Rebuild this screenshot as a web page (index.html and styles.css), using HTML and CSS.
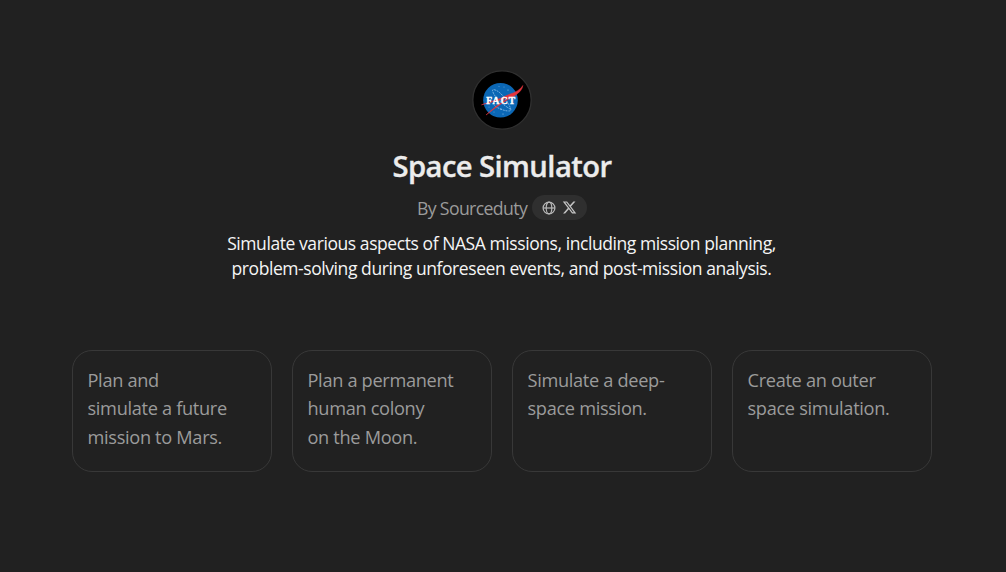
FILE: index.html
```html
<!DOCTYPE html>
<html lang="en">
<head>
<meta charset="utf-8">
<title>Space Simulator</title>
<link rel="stylesheet" href="styles.css">
</head>
<body>
<main class="page">
  <header class="intro">
    <svg class="avatar" viewBox="0 0 60 60" aria-label="Fact">
      <circle cx="30" cy="30" r="29.2" fill="#000" stroke="#303030" stroke-width="1.3"/>
      <circle cx="28.5" cy="30.2" r="17.3" fill="#0b67b5"/>
      <path d="M38 39C33 36 22 28 20.500 20.500C20.500 18.500 26 20 31 26C35 31 40 39 38.500 40.500C36 42.500 24 38 22 35" fill="none" stroke="#9fcdf0" stroke-width=".7" stroke-dasharray="2 .8"/>
      <g fill="#a9d2f2"><circle cx="27" cy="16.500" r=".4"/><circle cx="32" cy="17" r=".4"/><circle cx="36" cy="20" r=".5"/><circle cx="17" cy="37" r=".4"/><circle cx="22" cy="42" r=".4"/><circle cx="31" cy="44" r=".5"/><circle cx="29" cy="39" r=".6"/></g>
      <path d="M9.500 34.800L28 28.500L37 24.500Q48 21 50.800 15.500Q50.500 20.500 43 25.500Q31 32 14 45Q25 34 38 27.500L28 30Z" fill="#e5343d" stroke="#e5343d" stroke-width=".5"/>
      <text class="avatar-text" x="14.200" y="33.800" textLength="29" lengthAdjust="spacing">FACT</text>
    </svg>
    <h1 class="title">Space Simulator</h1>
    <div class="byline">
      <span class="author">By Sourceduty</span>
      <span class="links">
        <svg class="icon" viewBox="0 0 14 14" fill="none" stroke="#b8b8b8" stroke-width="1.2"><circle cx="7" cy="7" r="5.900"/><ellipse cx="7" cy="7" rx="2.800" ry="5.900"/><path d="M1.100 7H12.900"/></svg>
        <svg class="icon icon-x" viewBox="0 0 24 24" fill="#c4c4c4"><path d="M18.244 2.250h3.308l-7.227 8.260 8.502 11.240H16.170l-5.214-6.817L4.990 21.750H1.680l7.730-8.835L1.254 2.250H8.080l4.713 6.231zm-1.161 17.520h1.833L7.084 4.126H5.117z"/></svg>
      </span>
    </div>
    <p class="description">Simulate various aspects of NASA missions, including mission planning,<br>problem-solving during unforeseen events, and post-mission analysis.</p>
  </header>
  <section class="cards">
    <button class="card">Plan and<br>simulate a future<br>mission to Mars.</button>
    <button class="card">Plan a permanent<br>human colony<br>on the Moon.</button>
    <button class="card">Simulate a deep-<br>space mission.</button>
    <button class="card">Create an outer<br>space simulation.</button>
  </section>
</main>
</body>
</html>
```
FILE: styles.css
```css
* { box-sizing: border-box; }
body { margin: 0; background: #212121; font-family: "Open Sans", "Noto Sans", sans-serif; }
.page { height: 572px; padding: 70px 74px 0 72px; overflow: hidden; }
.intro { display: flex; flex-direction: column; align-items: center; height: 280px; }
.avatar { display: block; width: 60px; height: 60px; flex: none; }
.avatar-text { font: 700 9.500px "Liberation Serif", serif; fill: #fff; stroke: #fff; stroke-width: .4px; }
.title { margin: 16px 0 0; font-size: 29.200px; line-height: 40px; font-weight: 600; letter-spacing: -.58px; color: #ececec; -webkit-text-stroke: .35px #ececec; white-space: nowrap; }
.byline { display: flex; align-items: center; gap: 5px; height: 25px; margin-top: 9px; }
.author { padding-top: 2px; font-size: 17.700px; line-height: 25px; color: #9b9b9b; letter-spacing: -.64px; white-space: nowrap; }
.links { display: flex; align-items: center; justify-content: center; gap: 6px; width: 55px; height: 25px; padding-right: 1px; border-radius: 13px; background: #2f2f2f; }
.icon { display: block; width: 14px; height: 14px; flex: none; }
.icon-x { width: 15px; height: 15px; }
.description { margin: 11px 0 0; padding-right: 1px; font-size: 17.500px; line-height: 25px; letter-spacing: -.425px; color: #f5f5f5; text-align: center; white-space: nowrap; }
.cards { display: grid; grid-template-columns: repeat(4, 200px); gap: 20px; }
.card { display: flex; align-items: flex-start; height: 122px; padding: 15px 14.500px; border: 1px solid #383838; border-radius: 20px; background: transparent; font: 18.200px/28.400px "Open Sans", "Noto Sans", sans-serif; letter-spacing: -.32px; color: #9b9b9b; text-align: left; white-space: nowrap; }
```
